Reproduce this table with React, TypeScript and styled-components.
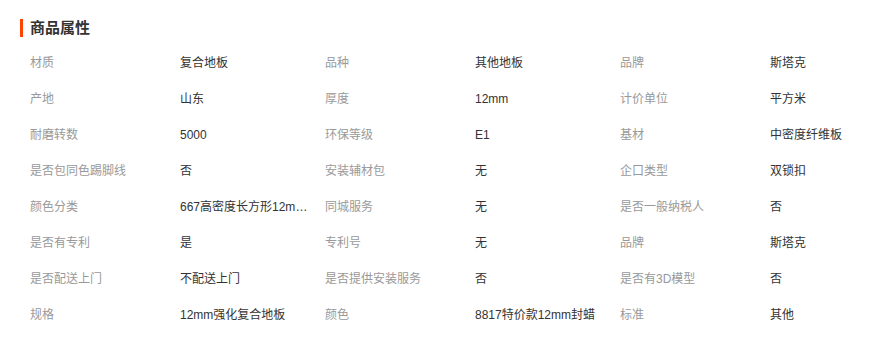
import styled, { createGlobalStyle } from "styled-components";

const GlobalStyle = createGlobalStyle`
  body {
    margin: 0;
    background: #ffffff;
    font-family: "Liberation Sans", "Noto Sans CJK SC", sans-serif;
  }
`;

const Wrap = styled.div`
  width: 896px;
  padding: 19px 20px 0 20px;
  box-sizing: border-box;
`;

const Title = styled.div`
  display: flex;
  align-items: center;
  height: 18px;
  font-size: 15px;
  font-weight: bold;
  color: #333333;
  border-left: 3px solid #ff4400;
  padding-left: 7px;
  line-height: 18px;
  margin-bottom: 8px;
`;

const Grid = styled.div`
  display: grid;
  grid-template-columns: repeat(3, 150px 145px);
  padding-left: 10px;
  font-size: 12px;
`;

const Cell = styled.div<{ $label?: boolean }>`
  height: 36px;
  line-height: 36px;
  color: ${(p) => (p.$label ? "#999999" : "#333333")};
  white-space: nowrap;
  overflow: hidden;
  text-overflow: ellipsis;
  max-width: ${(p) => (p.$label ? "150px" : "131px")};
`;

const rows: [string, string, string, string, string, string][] = [
  ["材质", "复合地板", "品种", "其他地板", "品牌", "斯塔克"],
  ["产地", "山东", "厚度", "12mm", "计价单位", "平方米"],
  ["耐磨转数", "5000", "环保等级", "E1", "基材", "中密度纤维板"],
  ["是否包同色踢脚线", "否", "安装辅材包", "无", "企口类型", "双锁扣"],
  ["颜色分类", "667高密度长方形12mm强化复合地板", "同城服务", "无", "是否一般纳税人", "否"],
  ["是否有专利", "是", "专利号", "无", "品牌", "斯塔克"],
  ["是否配送上门", "不配送上门", "是否提供安装服务", "否", "是否有3D模型", "否"],
  ["规格", "12mm强化复合地板", "颜色", "8817特价款12mm封蜡", "标准", "其他"],
];

const App = () => {
  return (
    <>
      <GlobalStyle />
      <Wrap>
        <Title>商品属性</Title>
        <Grid>
          {rows.map((r, i) =>
            r.map((text, j) => (
              <Cell key={`${i}-${j}`} $label={j % 2 === 0}>
                {text}
              </Cell>
            ))
          )}
        </Grid>
      </Wrap>
    </>
  );
};

export default App;
